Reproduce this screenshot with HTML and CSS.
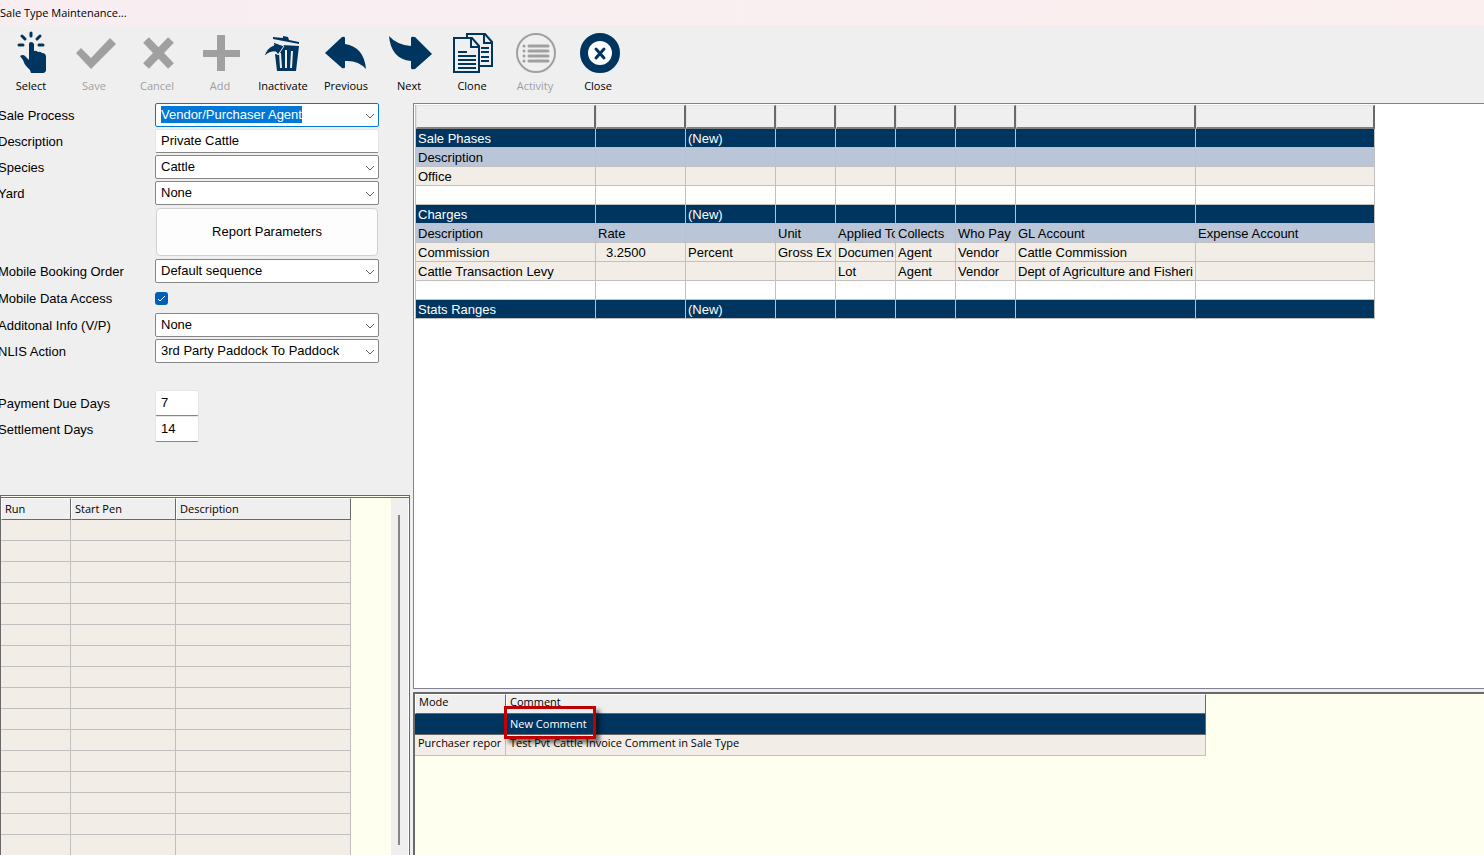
FILE: index.html
```html
<!DOCTYPE html>
<html lang="en">
  <head>
    <meta charset="UTF-8" />
    <meta name="viewport" content="width=device-width, initial-scale=1.0" />
    <title>Sale Type Maintenance</title>
    <link rel="stylesheet" href="styles.css">
  </head>
  <body>
    <header class="titlebar">Sale Type Maintenance...</header>

    <nav class="toolbar">
      <button type="button" class="tool">
        <svg viewBox="0 0 44 44">
          <path class="line" stroke-width="3" stroke-linecap="round" d="M22 2v3M13 5l3 3M31 5l-3 3M10 14h4M30 14h4" />
          <path d="M20 13q0-2 2-2t3 2v7q2-1 4 1 2-1 4 1 4 0 4 4v14l-2 2H22q-1-4-4-6-3-3-4-7l-3-4q3-2 5 0l4 4z" />
        </svg>
        Select
      </button>
      <button type="button" class="tool" disabled>
        <svg viewBox="0 0 44 44"><path d="M4 22l5-5 10 10L38 7l6 6-25 25z" /></svg>
        Save
      </button>
      <button type="button" class="tool" disabled>
        <svg viewBox="0 0 44 44"><path class="line" stroke-width="8" d="M11 9l25 26M36 9L11 35" /></svg>
        Cancel
      </button>
      <button type="button" class="tool" disabled>
        <svg viewBox="0 0 44 44"><path d="M19 4h8v15h15v7H27v14h-8V26H5v-7h14z" /></svg>
        Add
      </button>
      <button type="button" class="tool">
        <svg viewBox="0 0 44 44">
          <path d="M12 6l10 1V5l5 1 1 3 10 2v2L12 8z" />
          <path d="M21 14l17 1-3 25H16l-2-17 4 1z" />
          <path class="gap" stroke-width="2" d="M19 22l1 15M25 19v18M31 20l-1 17" />
          <path class="edge" stroke-width="1" d="M12 11l11 4-6 9-2-3Q8 20 3 26q2-9 10-12z" />
        </svg>
        Inactivate
      </button>
      <button type="button" class="tool">
        <svg viewBox="0 0 44 44"><path d="M1 22L18 6q3-1 3 1v6q19 3 21 25-8-9-21-8v6q0 2-3 1z" /></svg>
        Previous
      </button>
      <button type="button" class="tool">
        <svg viewBox="0 0 44 44"><path d="M45 23L28 6q-4-1-4 1v8Q10 14 2 5q2 23 22 25v7q0 2 4 1z" /></svg>
        Next
      </button>
      <button type="button" class="tool">
        <svg viewBox="0 0 44 44">
          <path class="line" stroke-width="2" d="M17 7V3h18l7 8v24H30M34 3v9h8M31 17h8M31 21h8M31 26h8M31 30h8" />
          <path class="page" stroke-width="2" d="M4 7h18l7 8v26H4zM21 7v9h8" />
          <path class="line" stroke-width="2" d="M8 21h9M8 25h18M8 29h18M8 33h18M8 37h18" />
        </svg>
        Clone
      </button>
      <button type="button" class="tool" disabled>
        <svg viewBox="0 0 44 44">
          <circle class="line" cx="23" cy="22" r="19" stroke-width="2" />
          <path class="line" stroke-width="3" stroke-linecap="round" d="M16 15h19M16 20h19M16 25h19M16 30h19M11 15h0M11 20h0M11 25h0M11 30h0" />
        </svg>
        Activity
      </button>
      <button type="button" class="tool">
        <svg viewBox="0 0 44 44">
          <circle class="ring" cx="24" cy="22" r="16" stroke-width="8" />
          <path class="line" stroke-width="3" stroke-linecap="round" d="M20 18l8 9M28 18l-8 9" />
        </svg>
        Close
      </button>
    </nav>

    <main class="workspace">
      <section class="side">
        <form class="details">
          <div class="field">
            <label for="process">Sale Process</label>
            <select id="process" class="active"><option>Vendor/Purchaser Agent</option></select>
          </div>
          <div class="field">
            <label for="description">Description</label>
            <input type="text" id="description" value="Private Cattle" />
          </div>
          <div class="field">
            <label for="species">Species</label>
            <select id="species"><option>Cattle</option></select>
          </div>
          <div class="field">
            <label for="yard">Yard</label>
            <select id="yard"><option>None</option></select>
          </div>
          <div class="field button_row">
            <button type="button" class="report_btn">Report Parameters</button>
          </div>
          <div class="field">
            <label for="booking">Mobile Booking Order</label>
            <select id="booking"><option>Default sequence</option></select>
          </div>
          <div class="field check_row">
            <label for="access">Mobile Data Access</label>
            <input type="checkbox" id="access" checked />
          </div>
          <div class="field">
            <label for="info">Additonal Info (V/P)</label>
            <select id="info"><option>None</option></select>
          </div>
          <div class="field">
            <label for="nlis">NLIS Action</label>
            <select id="nlis"><option>3rd Party Paddock To Paddock</option></select>
          </div>
          <div class="field days first">
            <label for="payment">Payment Due Days</label>
            <input type="text" id="payment" value="7" />
          </div>
          <div class="field days">
            <label for="settlement">Settlement Days</label>
            <input type="text" id="settlement" value="14" />
          </div>
        </form>

        <div class="runs">
          <div class="runs_body">
            <table class="grid small">
              <colgroup><col class="w70"><col class="w105"><col class="w175"></colgroup>
              <thead>
                <tr><th>Run</th><th>Start Pen</th><th>Description</th></tr>
              </thead>
              <tbody>
                <tr><td></td><td></td><td></td></tr>
                <tr><td></td><td></td><td></td></tr>
                <tr><td></td><td></td><td></td></tr>
                <tr><td></td><td></td><td></td></tr>
                <tr><td></td><td></td><td></td></tr>
                <tr><td></td><td></td><td></td></tr>
                <tr><td></td><td></td><td></td></tr>
                <tr><td></td><td></td><td></td></tr>
                <tr><td></td><td></td><td></td></tr>
                <tr><td></td><td></td><td></td></tr>
                <tr><td></td><td></td><td></td></tr>
                <tr><td></td><td></td><td></td></tr>
                <tr><td></td><td></td><td></td></tr>
                <tr><td></td><td></td><td></td></tr>
                <tr><td></td><td></td><td></td></tr>
                <tr><td></td><td></td><td></td></tr>
              </tbody>
            </table>
          </div>
          <div class="scrollbar"><div class="thumb"></div></div>
        </div>
      </section>

      <section class="content">
        <div class="phases">
          <table class="grid wide">
            <colgroup>
              <col class="w180"><col class="w90"><col class="w90"><col class="w60"><col class="w60"><col class="w60"><col class="w60"><col class="w180"><col>
            </colgroup>
            <thead>
              <tr><th></th><th></th><th></th><th></th><th></th><th></th><th></th><th></th><th></th></tr>
            </thead>
            <tbody>
              <tr class="group"><td>Sale Phases</td><td></td><td>(New)</td><td></td><td></td><td></td><td></td><td></td><td></td></tr>
              <tr class="heading"><td>Description</td><td></td><td></td><td></td><td></td><td></td><td></td><td></td><td></td></tr>
              <tr><td>Office</td><td></td><td></td><td></td><td></td><td></td><td></td><td></td><td></td></tr>
              <tr class="blank"><td></td><td></td><td></td><td></td><td></td><td></td><td></td><td></td><td></td></tr>
              <tr class="group"><td>Charges</td><td></td><td>(New)</td><td></td><td></td><td></td><td></td><td></td><td></td></tr>
              <tr class="heading"><td>Description</td><td>Rate</td><td></td><td>Unit</td><td>Applied To</td><td>Collects</td><td>Who Pay</td><td>GL Account</td><td>Expense Account</td></tr>
              <tr><td>Commission</td><td class="amount">3.2500</td><td>Percent</td><td>Gross Ex</td><td>Documen</td><td>Agent</td><td>Vendor</td><td>Cattle Commission</td><td></td></tr>
              <tr><td>Cattle Transaction Levy</td><td></td><td></td><td></td><td>Lot</td><td>Agent</td><td>Vendor</td><td>Dept of Agriculture and Fisheri</td><td></td></tr>
              <tr class="blank"><td></td><td></td><td></td><td></td><td></td><td></td><td></td><td></td><td></td></tr>
              <tr class="group"><td>Stats Ranges</td><td></td><td>(New)</td><td></td><td></td><td></td><td></td><td></td><td></td></tr>
            </tbody>
          </table>
        </div>

        <div class="comments">
          <table class="grid small">
            <colgroup><col class="w91"><col class="w700"></colgroup>
            <thead>
              <tr><th>Mode</th><th>Comment</th></tr>
            </thead>
            <tbody>
              <tr class="group"><td></td><td class="marked">New Comment</td></tr>
              <tr class="comment"><td>Purchaser repor</td><td>Test Pvt Cattle Invoice Comment in Sale Type</td></tr>
            </tbody>
          </table>
        </div>
      </section>
    </main>
  </body>
</html>
```

FILE: styles.css
```css
*,
*::after {
  box-sizing: border-box;
}

body {
  margin: 0;
  height: 100vh;
  display: flex;
  flex-direction: column;
  overflow: hidden;
  background: #efefef;
  color: #000;
  font: 13px/16px "Liberation Sans", Arial, sans-serif;
}

button,
input,
select {
  font: inherit;
  color: inherit;
}

.titlebar {
  height: 25px;
  background: linear-gradient(90deg, #f8eef2, #fbefef);
  font: 11px/25px "Open Sans", "Noto Sans", sans-serif;
}

/* toolbar */
.toolbar {
  height: 77px;
  display: flex;
}

.tool {
  width: 63px;
  padding: 6px 1px 0 0;
  display: flex;
  flex-direction: column;
  align-items: center;
  gap: 3px;
  border: 0;
  background: none;
  font: 11px/15px "Open Sans", "Noto Sans", sans-serif;
}

.tool:disabled {
  color: #a0a0a0;
}

.tool svg {
  width: 44px;
  height: 44px;
  flex: none;
  overflow: visible;
  fill: #00355f;
  stroke: none;
}

.tool .line {
  fill: none;
  stroke: #00355f;
}

.tool .page {
  fill: #efefef;
  stroke: #00355f;
}

.tool .ring {
  fill: #fff;
  stroke: #00355f;
}

.tool .gap {
  fill: none;
  stroke: #efefef;
}

.tool .edge {
  stroke: #efefef;
}

.tool:disabled svg {
  fill: #a0a0a0;
}

.tool:disabled .line {
  stroke: #a0a0a0;
}

.workspace {
  flex: 1;
  min-height: 0;
  display: flex;
  gap: 3px;
}

.side {
  width: 410px;
  flex: none;
  display: flex;
  flex-direction: column;
}

/* form */
.details {
  height: 393px;
}

.field {
  height: 26px;
  display: grid;
  grid-template-columns: 155px 224px;
  align-items: center;
}

.field label {
  margin-left: -2px;
  padding-top: 1px;
}

.field select,
.field input[type="text"] {
  width: 100%;
  height: 24px;
  padding: 0 5px 1px;
  border: 1px solid #868686;
  border-radius: 2px;
  outline: none;
  background: #fff;
  appearance: none;
}

.field select {
  background: #fff url("data:image/svg+xml,%3Csvg xmlns='http://www.w3.org/2000/svg' width='10' height='6'%3E%3Cpath d='M1 1l4 4 4-4' fill='none' stroke='%23606060'/%3E%3C/svg%3E") no-repeat right 3px top 9px;
}

/* selected text in the focused drop-down */
.field select.active {
  border-color: #0078d7;
  color: #fff;
  background:
    url("data:image/svg+xml,%3Csvg xmlns='http://www.w3.org/2000/svg' width='10' height='6'%3E%3Cpath d='M1 1l4 4 4-4' fill='none' stroke='%23606060'/%3E%3C/svg%3E") no-repeat right 3px top 9px,
    linear-gradient(#0078d7, #0078d7) no-repeat 5px 2px / 141px 17px,
    #fff;
}

.field input[type="text"] {
  border-color: #e5e5e5;
  border-bottom-color: #868686;
}

.button_row {
  height: 52px;
}

.report_btn {
  grid-column: 2;
  height: 48px;
  margin: 0 1px;
  border: 1px solid #d0d0d0;
  border-radius: 4px;
  background: #fdfdfd;
}

.check_row {
  height: 28px;
}

.field input[type="checkbox"] {
  width: 13px;
  height: 13px;
  margin: 0;
  appearance: none;
  border-radius: 3px;
  background: #005fb8 url("data:image/svg+xml,%3Csvg xmlns='http://www.w3.org/2000/svg' width='13' height='13'%3E%3Cpath d='M3 7l2 2 5-5' fill='none' stroke='white'/%3E%3C/svg%3E");
}

.days {
  grid-template-columns: 155px 44px;
}

.days.first {
  margin-top: 26px;
}

.field.days input {
  height: 26px;
}

/* grids */
.grid {
  table-layout: fixed;
  border-collapse: separate;
  border-spacing: 0;
  white-space: nowrap;
}

.grid th {
  text-align: left;
  font-weight: normal;
  background: #efefef;
}

.grid td {
  padding: 0 2px;
  overflow: hidden;
  border-right: 1px solid #c0c0c0;
  border-bottom: 1px solid #c0c0c0;
  background: #f2ede6;
}

.w60 { width: 60px; }
.w70 { width: 70px; }
.w90 { width: 90px; }
.w91 { width: 91px; }
.w105 { width: 105px; }
.w175 { width: 175px; }
.w180 { width: 180px; }
.w700 { width: 700px; }

.wide {
  width: 960px;
  border-left: 1px solid #c0c0c0;
}

.wide th {
  height: 24px;
  padding: 0;
  border: 1px solid #e0e0e0;
  border-right: 2px solid #696969;
  border-bottom: 2px solid #808080;
}

.wide td {
  height: 19px;
  padding-top: 2px;
}

.grid .heading td {
  background: #bac6d8;
}

.grid .blank td {
  background: #fff;
}

.grid .group td {
  background: #00355f;
  color: #fff;
}

.wide .amount {
  padding-left: 10px;
}

.small {
  font: 11px/14px "Open Sans", "Noto Sans", sans-serif;
}

.small th {
  height: 22px;
  padding: 0 3px;
  border: 1px solid #fff;
  border-right-color: #696969;
  border-bottom-color: #696969;
}

.small td {
  height: 21px;
}

.runs {
  flex: 1;
  min-height: 0;
  display: flex;
  border: 1px solid #696969;
  border-top: 3px double #696969;
  border-bottom: 0;
  background: #ffffef;
}

.runs_body {
  flex: 1;
  overflow: hidden;
}

.runs .grid {
  width: 350px;
}

.scrollbar {
  width: 18px;
  padding: 17px 8px 10px 7px;
  background: #efefef;
  border-right: 1px solid #fff;
}

.thumb {
  width: 2px;
  height: 100%;
  background: #868686;
}

.content {
  flex: 1;
  min-width: 0;
  display: flex;
  flex-direction: column;
  gap: 3px;
  padding-top: 1px;
}

.phases {
  flex: 1;
  min-height: 0;
  overflow: hidden;
  padding: 1px 0 0 1px;
  border: 1px solid #828290;
  border-right: 0;
  background: #fff;
}

.comments {
  height: 163px;
  overflow: hidden;
  border: 2px solid #696969;
  border-right: 0;
  border-bottom: 0;
  background: #ffffef;
}

.comments .grid {
  width: 791px;
}

.comments th {
  height: 20px;
  padding-bottom: 4px;
}

.comments td {
  padding: 0 3px;
}

.comments td + td {
  padding-left: 4px;
}

.comments .group td {
  border-color: #696969;
}

.comments .comment td {
  padding-bottom: 4px;
}

.comments .grid .marked {
  position: relative;
  overflow: visible;
}

/* red callout round the new comment cell */
.marked::after {
  content: "";
  position: absolute;
  top: -8px;
  left: -2px;
  width: 92px;
  height: 33px;
  border: 3px solid #c00000;
  box-shadow: 4px 4px 4px rgba(0, 0, 0, 0.5);
}
```
